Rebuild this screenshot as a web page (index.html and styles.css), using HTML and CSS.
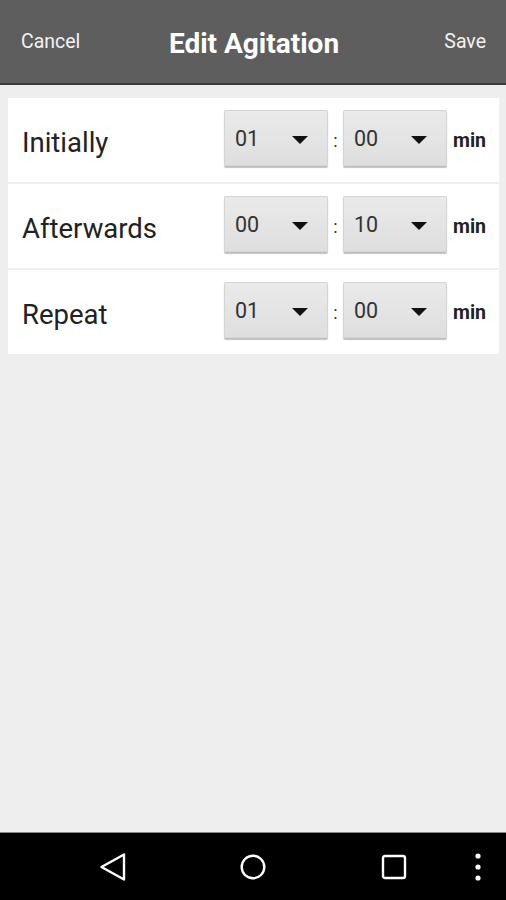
FILE: index.html
```html
<!DOCTYPE html>
<html>
<head>
<meta charset="utf-8">
<link rel="stylesheet" href="styles.css">
</head>
<body>
<div class="screen">
  <header class="topbar">
    <span class="action">Cancel</span>
    <span class="title">Edit Agitation</span>
    <span class="action right">Save</span>
  </header>
  <main class="content">
    <section class="card">
      <div class="row">
        <span class="label">Initially</span>
        <div class="pickers">
          <div class="drop"><span>01</span><i class="arrow"></i></div>
          <span class="colon">:</span>
          <div class="drop"><span>00</span><i class="arrow"></i></div>
          <span class="unit">min</span>
        </div>
      </div>
      <div class="row">
        <span class="label">Afterwards</span>
        <div class="pickers">
          <div class="drop"><span>00</span><i class="arrow"></i></div>
          <span class="colon">:</span>
          <div class="drop"><span>10</span><i class="arrow"></i></div>
          <span class="unit">min</span>
        </div>
      </div>
      <div class="row">
        <span class="label">Repeat</span>
        <div class="pickers">
          <div class="drop"><span>01</span><i class="arrow"></i></div>
          <span class="colon">:</span>
          <div class="drop"><span>00</span><i class="arrow"></i></div>
          <span class="unit">min</span>
        </div>
      </div>
    </section>
  </main>
  <nav class="navbar">
    <svg class="nav-ico back" width="28" height="28" viewBox="0 0 28 28"><path d="M25 1.5 L2.5 14 L25 26.5 Z" fill="none" stroke="#fff" stroke-width="2.4" stroke-linejoin="round"/></svg>
    <svg class="nav-ico home" width="28" height="28" viewBox="0 0 28 28"><circle cx="14" cy="14" r="11.3" fill="none" stroke="#fff" stroke-width="2.4"/></svg>
    <svg class="nav-ico recent" width="28" height="28" viewBox="0 0 28 28"><rect x="3" y="3" width="22" height="22" rx="2" fill="none" stroke="#fff" stroke-width="2.4"/></svg>
    <svg class="nav-dots" width="10" height="28" viewBox="0 0 10 28"><circle cx="5" cy="3" r="2.6" fill="#fff"/><circle cx="5" cy="14" r="2.6" fill="#fff"/><circle cx="5" cy="25" r="2.6" fill="#fff"/></svg>
  </nav>
</div>
</body>
</html>
```
FILE: styles.css
```css
* { box-sizing: border-box; }
html, body { margin: 0; padding: 0; }
body {
  font-family: Roboto, "Liberation Sans", sans-serif;
  background: #eeeeee;
}
.screen {
  width: 506px;
  height: 900px;
  display: flex;
  flex-direction: column;
}
.topbar {
  height: 85px;
  flex: none;
  background: #5e5e5e;
  border-bottom: 2px solid #3a3a3a;
  display: flex;
  align-items: center;
  padding: 0 20px 0 21px;
  color: #fff;
}
.action {
  flex: 1;
  font-size: 19.5px;
  color: #f2f2f2;
}
.action.right { text-align: right; }
.title {
  font-size: 28px;
  font-weight: bold;
  padding-top: 4px;
  margin-left: 1px;
}
.content {
  flex: 1;
  padding: 13px 7px 0 8px;
}
.card {
  background: #fff;
}
.row {
  height: 86px;
  display: flex;
  align-items: center;
  justify-content: space-between;
  padding: 0 13px 4px 14px;
  border-top: 2px solid #efefef;
}
.row:first-child { border-top: none; height: 84px; }
.label {
  font-size: 27.5px;
  color: #222;
  padding-top: 9px;
}
.pickers {
  display: flex;
  align-items: center;
}
.drop {
  width: 104px;
  height: 56px;
  background: linear-gradient(#eaeaea, #dedede);
  border-radius: 2px;
  box-shadow: 0 2px 1px rgba(0,0,0,0.25), 0 0 0 1px #d4d4d4 inset;
  display: flex;
  align-items: center;
  justify-content: space-between;
  padding: 0 20px 0 11px;
  font-size: 21.5px;
  color: #333;
}
.arrow {
  width: 0;
  height: 0;
  border-left: 8px solid transparent;
  border-right: 8px solid transparent;
  border-top: 8px solid #111;
  margin-top: 4px;
}
.colon {
  width: 15px;
  text-align: center;
  font-size: 18px;
  color: #333;
  padding-top: 4px;
}
.unit {
  margin-left: 6px;
  font-size: 19.5px;
  font-weight: bold;
  color: #222;
  padding-top: 4px;
}
.navbar {
  height: 68px;
  flex: none;
  background: #000;
  border-top: 1px solid #888;
  display: flex;
  align-items: center;
  padding: 0 0 0 99px;
}
.back { margin-right: 112px; }
.home { margin-right: 113px; }
.recent { margin-right: 65px; }
```
